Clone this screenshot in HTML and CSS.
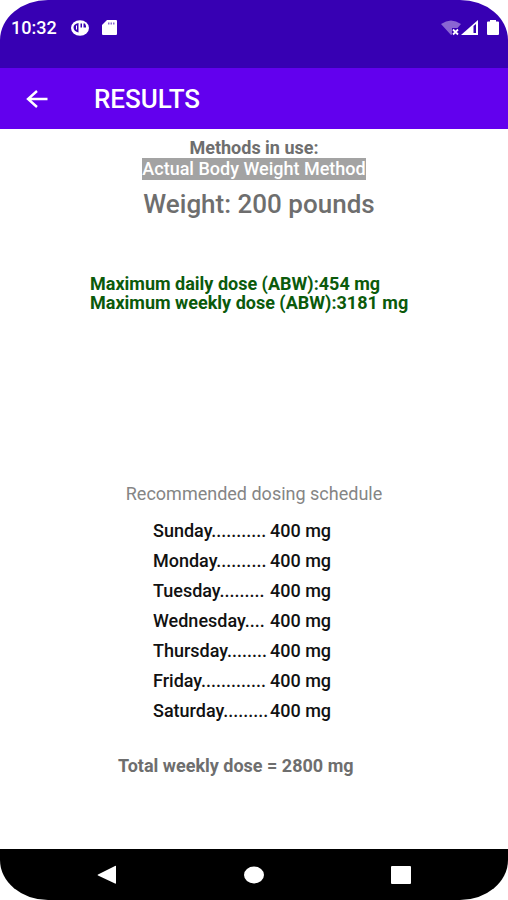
FILE: index.html
```html
<!DOCTYPE html>
<html lang="en">
<head>
  <meta charset="UTF-8">
  <meta name="viewport" content="width=device-width, initial-scale=1.0">
  <title>Results</title>
  <link rel="stylesheet" href="styles.css">
</head>
<body>
  <div class="screen">
    <div class="status-bar">
      <span class="clock">10:32</span>
      <svg class="icon-app" width="20" height="16" viewBox="0 0 20 16">
        <ellipse cx="10" cy="8" rx="9" ry="7.7" fill="#fff"/>
        <path d="M8.500 3v9.500C5.500 12 3.500 10 3.500 7.500 3.500 5.500 5 3.500 8.500 3zM10.500 3.500H12v4h-1.500zM13.500 3.500H15L16 6v1.500h-2.500z" fill="#3700b3"/>
        <path d="M6 5.500h1v4H6z" fill="#fff"/>
      </svg>
      <svg class="icon-sd" width="15" height="15" viewBox="0 0 15 15">
        <path d="M5 0h9q1 0 1 1v13q0 1-1 1H1q-1 0-1-1V5z" fill="#fff"/>
        <path d="M6 2.500h1.500v2H6zM8.500 2.500H10v2H8.500zM11 2.500h1.500v2H11z" fill="#3700b3" opacity=".6"/>
      </svg>
      <div class="signals">
        <svg width="20" height="16" viewBox="0 0 20 16">
          <path d="M0 4Q10-3 20 4l-3.500 4H11v6.500L10 15z" fill="#8a66d3"/>
          <path d="M12 9.500l5 5M17 9.500l-5 5" stroke="#fff" stroke-width="1.800"/>
        </svg>
        <svg width="17" height="15" viewBox="0 0 17 15">
          <path d="M0 15L17 0v15z" fill="#fff"/>
          <path d="M12.500 6l2.500-2v9h-2.500z" fill="#3700b3"/>
        </svg>
        <svg class="icon-battery" width="12" height="15" viewBox="0 0 12 15">
          <path d="M3 0h6v1.500h2q1 0 1 1V14q0 1-1 1H1q-1 0-1-1V2.500q0-1 1-1h2z" fill="#fff"/>
        </svg>
      </div>
    </div>

    <header class="app-bar">
      <button class="back" aria-label="Back">
        <svg width="22" height="18" viewBox="0 0 22 18">
          <path d="M21.500 9H2M11 1L2 9l9 8" fill="none" stroke="#fff" stroke-width="2.400"/>
        </svg>
      </button>
      <h1>RESULTS</h1>
    </header>

    <main>
      <p class="label">Methods in use:</p>
      <p class="method"><span>Actual Body Weight Method</span></p>
      <h2>Weight: 200 pounds</h2>

      <div class="max-dose">
        <p>Maximum daily dose (ABW):454 mg</p>
        <p>Maximum weekly dose (ABW):3181 mg</p>
      </div>

      <p class="schedule-title">Recommended dosing schedule</p>
      <table class="schedule">
        <tr><th scope="row">Sunday...........</th><td>400 mg</td></tr>
        <tr><th scope="row">Monday..........</th><td>400 mg</td></tr>
        <tr><th scope="row">Tuesday.........</th><td>400 mg</td></tr>
        <tr><th scope="row">Wednesday....</th><td>400 mg</td></tr>
        <tr><th scope="row">Thursday........</th><td>400 mg</td></tr>
        <tr><th scope="row">Friday.............</th><td>400 mg</td></tr>
        <tr><th scope="row">Saturday.........</th><td>400 mg</td></tr>
      </table>
      <p class="total">Total weekly dose = 2800 mg</p>
    </main>

    <nav class="nav-bar">
      <button aria-label="Back">
        <svg width="20" height="20" viewBox="0 0 20 20"><path d="M1 9.500L18 1q1-.5 1 .5v16.500q0 1-1 .5L1 10.500q-1-.5 0-1z" fill="#fff"/></svg>
      </button>
      <button aria-label="Home">
        <svg width="20" height="18" viewBox="0 0 20 18"><ellipse cx="10" cy="9" rx="10" ry="8.500" fill="#fff"/></svg>
      </button>
      <button aria-label="Recent apps">
        <svg width="20" height="18" viewBox="0 0 20 18"><rect width="20" height="18" rx="1" fill="#fff"/></svg>
      </button>
    </nav>
  </div>
</body>
</html>
```
FILE: styles.css
```css
* {
  box-sizing: border-box;
}
body {
  margin: 0;
  background: #fff;
  font-family: Roboto, "Liberation Sans", sans-serif;
}
h1, h2, p {
  margin: 0;
}
button {
  display: flex;
  padding: 0;
  border: none;
  background: none;
  cursor: pointer;
}
.screen {
  display: flex;
  flex-direction: column;
  min-height: 100vh;
  border-radius: 48px / 40px;
  overflow: hidden;
}
.status-bar {
  display: flex;
  align-items: flex-start;
  height: 68px;
  padding: 20px 9px 0 11px;
  background: #3700b3;
  color: #fff;
}
.clock {
  font-size: 18px;
  font-weight: 500;
  line-height: 16px;
}
.icon-app {
  margin-left: 13px;
}
.icon-sd {
  margin-left: 12px;
}
.signals {
  display: flex;
  margin-left: auto;
}
.icon-battery {
  margin-left: 9px;
}
.app-bar {
  display: flex;
  align-items: center;
  height: 61px;
  padding-left: 26px;
  background: #6200ee;
  color: #fff;
}
.app-bar h1 {
  margin-left: 46px;
  font-size: 26px;
  font-weight: 500;
}
main {
  flex: 1;
  padding-top: 9px;
  color: #6e6e6e;
}
.label, .method, h2 {
  text-align: center;
}
.label {
  font-size: 18px;
  font-weight: 700;
  line-height: 20px;
}
.method {
  font-size: 18px;
  font-weight: 500;
  line-height: 22px;
  color: #fff;
}
.method span {
  display: inline-block;
  background: #a3a3a3;
}
h2 {
  padding-left: 10px;
  margin-top: 8px;
  font-size: 26px;
  font-weight: 500;
  line-height: 32px;
}
.max-dose {
  margin: 54px 0 0 90px;
  font-size: 18px;
  font-weight: 700;
  line-height: 19px;
  color: #0b5a0b;
}
.schedule-title {
  margin-top: 172px;
  text-align: center;
  font-size: 18px;
  line-height: 20px;
  color: #858585;
}
.schedule {
  margin: 12px 0 0 153px;
  border-collapse: collapse;
  font-size: 18px;
  line-height: 30px;
  color: #111;
}
.schedule th, .schedule td {
  padding: 0;
  font-weight: 500;
  text-align: left;
}
.schedule th {
  width: 117px;
}
.total {
  margin: 30px 0 0 118px;
  font-size: 18px;
  font-weight: 700;
  line-height: 20px;
}
.nav-bar {
  display: flex;
  justify-content: center;
  align-items: center;
  gap: 127px;
  height: 51px;
  background: #000;
}
```
